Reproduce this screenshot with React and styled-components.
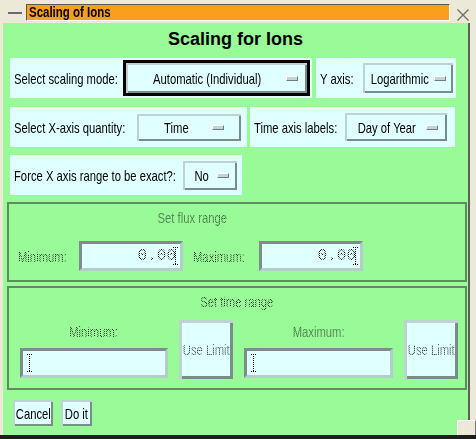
import React from "react";
import styled, { createGlobalStyle } from "styled-components";

// no condensed face is installed, so the X11 helvetica look is done with scaleX
const SANS = `"Liberation Sans", Arial, sans-serif`;

const Global = createGlobalStyle`
  html, body { margin: 0; padding: 0; background: #ece9d8; }
  * { box-sizing: border-box; }
`;

const Win = styled.div`
  position: relative;
  width: 476px;
  height: 439px;
  background: #ece9d8;
  overflow: hidden;
  font-family: ${SANS};
  font-size: 15px;
  color: #000;
`;

const Narrow = styled.span`
  display: inline-block;
  flex-shrink: 0;
  white-space: nowrap;
  transform: scaleX(${(p) => p.$sx || 0.75});
  transform-origin: ${(p) => p.$origin || "center"} center;
`;

// stippled text of an insensitive widget
const Dim = styled(Narrow)`
  color: transparent;
  background-image: repeating-conic-gradient(#111 0 25%, transparent 0 50%);
  background-size: ${(p) => 2 / (p.$sx || 0.75)}px 2px;
  -webkit-background-clip: text;
  background-clip: text;
`;

const TitleBar = styled.div`
  display: flex;
  align-items: flex-start;
  height: 23px;
  padding-top: 4px;
`;

const Dash = styled.div`
  width: 14px;
  height: 2px;
  margin: 8px 0 0 8px;
  background: #6a6a6a;
`;

const Caption = styled.div`
  width: 424px;
  height: 17px;
  margin-left: 4px;
  padding-left: 2px;
  background: #fb9e1c;
  border-top: 1px solid #5a5a5a;
  border-left: 1px solid #5a5a5a;
  border-bottom: 1px solid #fff;
  border-right: 1px solid #fff;
  font-weight: bold;
  font-size: 14px;
  line-height: 15px;
`;

const Close = styled.div`
  margin: 3px 0 0 7px;
  width: 12px;
  height: 12px;
`;

const Client = styled.div`
  margin-left: 3px;
  width: 467px;
  height: 412px;
  background: #98fb98;
  border-right: 2px solid #5e5e5e;
  display: flex;
  flex-direction: column;
`;

const Bottom = styled.div`
  height: 4px;
  background: #1e1e1e;
`;

const Grip = styled.div`
  position: absolute;
  right: 0;
  bottom: 4px;
  width: 19px;
  height: 15px;
  border-top: 1px solid #fff;
  border-left: 1px solid #fff;
  border-right: 1px solid #7a7a7a;
  background: #ece9d8;
`;

const Heading = styled.div`
  height: 35px;
  padding-top: 6px;
  line-height: 20px;
  text-align: center;
  font-weight: bold;
  font-size: 18px;
`;

const Row = styled.div`
  display: flex;
  gap: ${(p) => p.$gap || 0}px;
  margin: 0 0 ${(p) => p.$mb || 0}px 7px;
`;

const Panel = styled.div`
  display: flex;
  align-items: center;
  width: ${(p) => p.$w}px;
  height: 40px;
  padding: 0 ${(p) => p.$pr}px 0 4px;
  background: #e0ffff;
`;

const Label = styled(Narrow).attrs({ $origin: "left" })`
  flex-shrink: 1;
  min-width: 0;
`;

const OptionBtn = styled.div`
  display: flex;
  flex-shrink: 0;
  align-items: center;
  margin-left: auto;
  width: ${(p) => p.$w}px;
  height: ${(p) => p.$h}px;
  padding: 0 ${(p) => p.$pr}px 0 3px;
  background: #e0ffff;
  border: ${(p) => (p.$focus ? "3px solid #000" : "none")};
  box-shadow: inset 2px 2px 0 #bfd2d2, inset -2px -2px 0 #7b8b8b;
`;

const OptText = styled.span`
  flex: 1;
  min-width: 0;
  display: flex;
  justify-content: center;
`;

const Indicator = styled.span`
  flex-shrink: 0;
  width: 12px;
  height: 5px;
  background: #c4d4d4;
  border-top: 1px solid #fff;
  border-left: 1px solid #fff;
  border-right: 1px solid #6f7f7f;
  border-bottom: 1px solid #6f7f7f;
`;

const Frame = styled.div`
  margin: 0 0 ${(p) => p.$mb}px 4px;
  width: 460px;
  height: ${(p) => p.$h}px;
  border: 2px solid #5f8c5f;
  padding: ${(p) => p.$pad};
  display: flex;
  flex-direction: column;
  align-items: ${(p) => (p.$center ? "center" : "flex-start")};
`;

const FrameTitle = styled(Dim)`
  line-height: 16px;
  margin-bottom: ${(p) => p.$mb}px;
`;

const FluxCol = styled.div`
  display: flex;
  flex-direction: column;
  align-items: center;
`;

const FluxRow = styled.div`
  display: flex;
  align-items: center;
`;

const LabelSlot = styled.div`
  flex-shrink: 0;
  width: ${(p) => p.$w}px;
  display: flex;
`;

const Field = styled.div`
  display: flex;
  align-items: center;
  justify-content: ${(p) => (p.$right ? "flex-end" : "flex-start")};
  width: ${(p) => p.$w}px;
  height: 30px;
  margin: ${(p) => p.$m || 0};
  padding: 0 2px 0 4px;
  background: #e0ffff;
  border-top: 3px solid #7d8d8d;
  border-left: 3px solid #7d8d8d;
  border-bottom: 3px solid #b6cccc;
  border-right: 3px solid #b6cccc;
`;

const MonoDim = styled(Dim).attrs({ $sx: 1 })`
  font-family: "Liberation Mono", "Courier New", monospace;
  font-size: 16px;
  margin-right: -3px;
`;

const TimeRow = styled.div`
  display: flex;
  align-items: flex-start;
  gap: 11px;
  padding-left: 11px;
  width: 100%;
`;

const TimeCol = styled.div`
  display: flex;
  flex-direction: column;
  align-items: center;
  padding-top: 3px;
  gap: 8px;
`;

const LimitBtn = styled.div`
  display: flex;
  align-items: center;
  justify-content: center;
  width: 54px;
  height: 59px;
  background: #e0ffff;
  box-shadow: inset 3px 3px 0 #bfd2d2, inset -3px -3px 0 #7b8b8b;
`;

const Actions = styled.div`
  display: flex;
  gap: 8px;
  margin-left: 10px;
`;

const PushBtn = styled.div`
  display: flex;
  align-items: center;
  justify-content: center;
  width: ${(p) => p.$w}px;
  height: 26px;
  background: #e0ffff;
  box-shadow: inset 2px 2px 0 #bfd2d2, inset -2px -2px 0 #7b8b8b;
`;

function Caret() {
  return (
    <svg width="5" height="18" viewBox="0 0 5 18">
      <path
        d="M0 0.5H5M0 17.5H5M2.5 0V18"
        stroke="#000"
        strokeWidth="1"
        strokeDasharray="1 1"
        fill="none"
      />
    </svg>
  );
}

function Option({ text, w, h, pr, focus }) {
  return (
    <OptionBtn $w={w} $h={h} $pr={pr} $focus={focus}>
      <OptText>
        <Narrow>{text}</Narrow>
      </OptText>
      <Indicator />
    </OptionBtn>
  );
}

export default function App() {
  return (
    <Win>
      <Global />
      <TitleBar>
        <Dash />
        <Caption>
          <Narrow $sx={0.82} $origin="left">Scaling of Ions</Narrow>
        </Caption>
        <Close>
          <svg width="12" height="12" viewBox="0 0 12 12">
            <path d="M0.5 0.5L11.5 11.5M11.5 0.5L0.5 11.5" stroke="#6e6e6e" strokeWidth="1.3" />
          </svg>
        </Close>
      </TitleBar>
      <Client>
        <Heading>Scaling for Ions</Heading>

        <Row $gap={4} $mb={9}>
          <Panel $w={302} $pr={2}>
            <Label>Select scaling mode:</Label>
            <Option text="Automatic (Individual)" w={187} h={36} pr={9} focus />
          </Panel>
          <Panel $w={140} $pr={3}>
            <Label>Y axis:</Label>
            <Option text="Logarithmic" w={90} h={30} pr={7} />
          </Panel>
        </Row>

        <Row $gap={3} $mb={8}>
          <Panel $w={237} $pr={6}>
            <Label>Select X-axis quantity:</Label>
            <Option text="Time" w={104} h={27} pr={17} />
          </Panel>
          <Panel $w={205} $pr={8}>
            <Label>Time axis labels:</Label>
            <Option text="Day of Year" w={102} h={28} pr={9} />
          </Panel>
        </Row>

        <Row $mb={7}>
          <Panel $w={232} $pr={5}>
            <Label>Force X axis range to be exact?:</Label>
            <Option text="No" w={54} h={29} pr={8} />
          </Panel>
        </Row>

        <Frame $h={80} $mb={4} $pad="6px 0 0 9px">
          <FluxCol>
            <FrameTitle $mb={15}>Set flux range</FrameTitle>
            <FluxRow>
              <LabelSlot $w={52}>
                <Dim $origin="left">Minimum:</Dim>
              </LabelSlot>
              <Field $w={104} $m="0 10px 0 9px" $right>
                <MonoDim>0.00</MonoDim>
                <Caret />
              </Field>
              <LabelSlot $w={57}>
                <Dim $origin="left">Maximum:</Dim>
              </LabelSlot>
              <Field $w={104} $m="0 3px 0 9px" $right>
                <MonoDim>0.00</MonoDim>
                <Caret />
              </Field>
            </FluxRow>
          </FluxCol>
        </Frame>

        <Frame $h={104} $mb={10} $pad="6px 0 0 0" $center>
          <FrameTitle $mb={10}>Set time range</FrameTitle>
          <TimeRow>
            <TimeCol>
              <Dim>Minimum:</Dim>
              <Field $w={148}>
                <Caret />
              </Field>
            </TimeCol>
            <LimitBtn>
              <Dim>Use Limit</Dim>
            </LimitBtn>
            <TimeCol>
              <Dim>Maximum:</Dim>
              <Field $w={149}>
                <Caret />
              </Field>
            </TimeCol>
            <LimitBtn>
              <Dim>Use Limit</Dim>
            </LimitBtn>
          </TimeRow>
        </Frame>

        <Actions>
          <PushBtn $w={40}>
            <Narrow>Cancel</Narrow>
          </PushBtn>
          <PushBtn $w={31}>
            <Narrow>Do it</Narrow>
          </PushBtn>
        </Actions>
      </Client>
      <Bottom />
      <Grip />
    </Win>
  );
}
